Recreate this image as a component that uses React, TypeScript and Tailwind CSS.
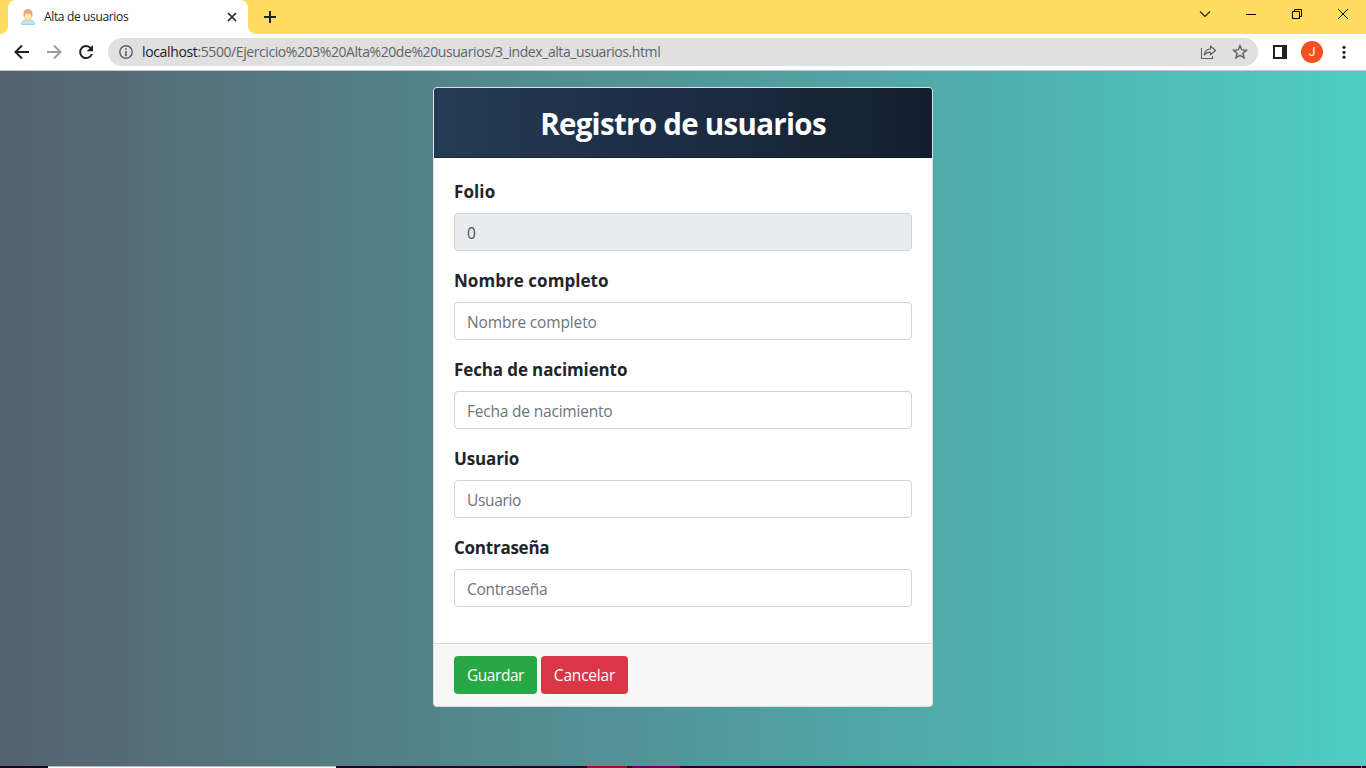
import React from "react";

type Field = { id: string; label: string; value?: string; track: string; placeholderTrack: string };

const fields: Field[] = [
  { id: "folio", label: "Folio", value: "0", track: "tracking-[0.1px]", placeholderTrack: "" },
  { id: "nombre", label: "Nombre completo", track: "tracking-[0.05px]", placeholderTrack: "placeholder:tracking-[-0.15px]" },
  { id: "fecha", label: "Fecha de nacimiento", track: "tracking-[-0.12px]", placeholderTrack: "placeholder:tracking-[-0.2px]" },
  { id: "usuario", label: "Usuario", track: "tracking-[-0.15px]", placeholderTrack: "placeholder:tracking-[-0.35px]" },
  { id: "clave", label: "Contraseña", track: "tracking-[-0.25px]", placeholderTrack: "placeholder:tracking-[-0.3px]" },
];

function Favicon() {
  return (
    <svg width="16" height="16" viewBox="0 0 16 16" className="shrink-0">
      <path d="M1.500 15.500c0-3 2-4.300 4.500-4.600h4c2.500.3 4.500 1.600 4.500 4.600z" fill="#bfe3fa" stroke="#8fc3ea" strokeWidth=".8" />
      <path d="M6 9h4v2.500L8 13l-2-1.500z" fill="#f5d596" />
      <path d="M4.500 4h7v3c0 2.500-1.600 4.300-3.500 4.300S4.500 9.500 4.500 7z" fill="#ffe9ae" stroke="#e5b36c" strokeWidth=".7" />
      <path d="M4 6.800C3.300 2.500 4.800.5 8 .5s4.700 2 4 6.300L11 4.200C9 4.500 7 4.200 6 3.500L5 4.500z" fill="#f3a27c" stroke="#df875f" strokeWidth=".5" />
    </svg>
  );
}

function TabStrip() {
  return (
    <div className="flex h-[34px] bg-[#ffdd5e]">
      <div className="flex w-2 items-end bg-white">
        <div className="h-[34px] w-2 rounded-br-lg bg-[#ffdd5e]" />
      </div>
      <div className="flex w-60 items-center rounded-t-lg bg-white pl-3 pr-[10px]">
        <Favicon />
        <span className="ml-2 flex-1 whitespace-nowrap text-[12px] leading-4 tracking-[-0.35px] text-[#202124]">Alta de usuarios</span>
        <svg width="12" height="12" viewBox="0 0 12 12" stroke="#202124" strokeWidth="1.7">
          <path d="M2 2l8 8M10 2l-8 8" />
        </svg>
      </div>
      <div className="w-2 bg-white">
        <div className="h-[34px] w-2 rounded-bl-lg bg-[#ffdd5e]" />
      </div>
      <svg width="12" height="12" viewBox="0 0 12 12" className="ml-2 mt-[11px]" stroke="#202124" strokeWidth="2">
        <path d="M6 0v12M0 6h12" />
      </svg>
      <div className="ml-auto flex">
        <svg width="46" height="28" viewBox="0 0 46 28" fill="none" stroke="#202124" strokeWidth="1.1">
          <path d="M18 11.500l5 5 5-5" />
        </svg>
        <svg width="46" height="28" viewBox="0 0 46 28" fill="#000">
          <path d="M18 14h10v1H18z" />
        </svg>
        <svg width="46" height="28" viewBox="0 0 46 28" fill="none" stroke="#000">
          <path d="M18.500 11.500h7v7h-7zM20.500 11.500v-2h7v7h-2" />
        </svg>
        <svg width="46" height="28" viewBox="0 0 46 28" fill="none" stroke="#000">
          <path d="M18 9l10 10M28 9L18 19" />
        </svg>
      </div>
    </div>
  );
}

function Toolbar() {
  return (
    <div className="flex h-[37px] items-center border-b border-[#c8c9cb] bg-white">
      <svg width="108" height="36" viewBox="0 0 108 36" fill="none" className="shrink-0">
        <path d="M29 18H16M22 11.500L15.500 18l6.500 6.500" stroke="#202124" strokeWidth="2" />
        <path d="M47 18h13M54 11.500L60.500 18 54 24.500" stroke="#9b9c9e" strokeWidth="2" />
        <path d="M90.800 14.300A6 6 0 1 0 91.800 20" stroke="#202124" strokeWidth="2" />
        <path d="M93 11v6.300h-6.300z" fill="#202124" />
      </svg>
      <div className="flex h-7 w-[1150px] items-center rounded-full bg-[#e0e0e0] pl-[11px] pr-[10px]">
        <svg width="14" height="14" viewBox="0 0 14 14" fill="none" className="shrink-0">
          <circle cx="7" cy="7" r="6.200" stroke="#5a5d61" strokeWidth="1.400" />
          <path d="M7 3.200v1.600M7 6v5" stroke="#5a5d61" strokeWidth="1.600" />
        </svg>
        <span className="ml-[9px] whitespace-nowrap text-[14px] leading-5 tracking-[-0.42px] text-[#5f6368]">
          <span className="tracking-[-0.35px] text-[#202124]">localhost</span>:5500/Ejercicio%203%20Alta%20de%20usuarios/3_index_alta_usuarios.html
        </span>
        <svg width="48" height="16" viewBox="0 0 48 16" fill="none" stroke="#5f6368" className="ml-auto shrink-0">
          <path d="M1.500 4v10.500h11V12" strokeWidth="1.100" />
          <path d="M4.300 11c.3-4 2.500-5.800 6.200-6V2l5 4.500-5 4.300V8.200c-2.800 0-4.700.8-6.200 2.800z" strokeWidth="1.200" strokeLinejoin="round" />
          <path d="M40 1.700l1.800 4.200 4.600.4-3.500 3 1.100 4.500-4-2.400-4 2.400 1.100-4.500-3.500-3 4.600-.4z" strokeWidth="1.500" />
        </svg>
      </div>
      <svg width="14" height="14" viewBox="0 0 14 14" className="ml-[15px] shrink-0">
        <path fillRule="evenodd" d="M0 0h14v14H0zM2 2v10h7V2z" fill="#202124" />
      </svg>
      <div className="ml-[14px] flex h-[22px] w-[22px] items-center justify-center rounded-full bg-[#f4511e] font-[Roboto] text-[12px] text-white">J</div>
      <svg width="4" height="14" viewBox="0 0 4 14" fill="#202124" className="ml-[19px] shrink-0">
        <circle cx="2" cy="2.300" r="1.600" />
        <circle cx="2" cy="7.300" r="1.600" />
        <circle cx="2" cy="12.200" r="1.600" />
      </svg>
    </div>
  );
}

function UserForm() {
  return (
    <div className="h-[620px] w-[500px] overflow-hidden rounded border border-[#dfdfdf] bg-white">
      <div className="flex h-[70px] items-center justify-center border-b border-black/25 bg-linear-to-r/srgb from-[#243b55] to-[#141e30] pt-[2px]">
        <h1 className="whitespace-nowrap text-[29.5px] font-bold leading-9 tracking-[-0.7px] text-white">Registro de usuarios</h1>
      </div>
      <div className="flex flex-col gap-4 px-5 pb-9 pt-5">
        {fields.map((f) => (
          <div key={f.id} className="flex flex-col gap-2">
            <label htmlFor={f.id} className={`h-[27px] whitespace-nowrap text-[17px] font-bold leading-[27px] text-[#212529] ${f.track}`}>
              {f.label}
            </label>
            <input
              id={f.id}
              readOnly={f.value !== undefined}
              defaultValue={f.value}
              placeholder={f.label}
              className={`h-[38px] w-full rounded border border-[#ced4da] bg-white px-3 pt-[2px] text-[15.5px] text-[#495057] placeholder:text-[#6c757d] read-only:bg-[#e9ecef] ${f.placeholderTrack}`}
            />
          </div>
        ))}
      </div>
      <div className="flex h-[63px] gap-1 border-t border-[#dcdcdc] bg-[#f7f7f7] px-5 pt-3">
        <button className="h-[38px] w-[83px] rounded bg-[#28a745] pt-px text-[15.5px] tracking-[-0.45px] text-white">Guardar</button>
        <button className="h-[38px] w-[87px] rounded bg-[#dc3545] pt-px text-[15.5px] tracking-[-0.2px] text-white">Cancelar</button>
      </div>
    </div>
  );
}

export default function App() {
  return (
    <div className="flex h-[768px] w-[1366px] flex-col overflow-hidden font-['Open_Sans','Noto_Sans',sans-serif]">
      <TabStrip />
      <Toolbar />
      <main className="flex h-[695px] justify-center bg-linear-to-r/srgb from-[#556270] to-[#4ecdc4] pt-4">
        <UserForm />
      </main>
      <div className="flex h-[2px] bg-[#26001f]">
        <div className="ml-12 w-[288px] border-t border-[#bcbcbc] bg-white" />
        <div className="ml-[251px] w-10 bg-[#a01323]" />
        <div className="ml-[5px] w-12 bg-[#68005c]" />
        <div className="ml-auto mr-1 w-px bg-[#8b768a]" />
      </div>
    </div>
  );
}
